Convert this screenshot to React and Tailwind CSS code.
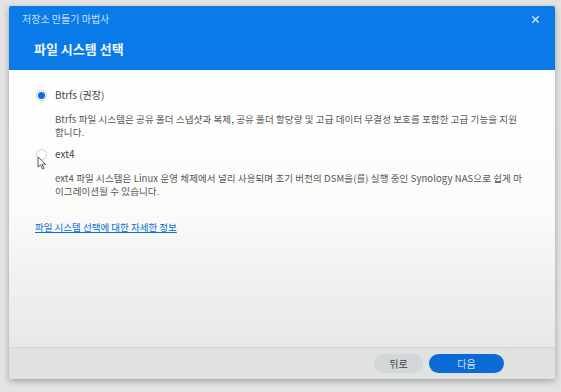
import React from 'react';
import { X } from 'lucide-react';

const font = { fontFamily: '"Noto Sans CJK KR", "Noto Sans", sans-serif' };

function Radio({ checked }) {
  return (
    <span className="flex h-[11px] w-[11px] items-center justify-center rounded-full border border-[#c9ccd0] bg-white">
      {checked && <span className="h-[7px] w-[7px] rounded-full bg-[#0a6fdc]" />}
    </span>
  );
}

function Cursor() {
  return (
    <svg className="absolute left-[37px] top-[156px]" width="10" height="14" viewBox="0 0 10 14">
      <path d="M1 1 L1 11 L3.5 8.8 L5.5 13 L7 12.3 L5 8.2 L8.5 8.2 Z" fill="#fff" stroke="#333" strokeWidth="0.8" />
    </svg>
  );
}

export default function App() {
  return (
    <div className="relative h-[392px] w-[561px] overflow-hidden bg-[#e3e4e2] pl-[9px] pt-[6px]" style={font}>
      <div className="flex h-[373px] w-[546px] flex-col overflow-hidden rounded-[2px] shadow-[0_2px_6px_rgba(0,0,0,0.3)]">
        {/* header */}
        <div className="h-[64px] bg-[#0a7ae9] pl-[13px] pr-[14px]">
          <div className="flex items-center justify-between pt-[7px]">
            <span className="text-[10px] leading-[12px] text-[#c8e0fb]">저장소 만들기 마법사</span>
            <X size={11} strokeWidth={3} className="text-[#d6e8fc]" />
          </div>
          <div className="pl-[12px] pt-[16px] text-[13px] font-bold leading-[16px] text-[#eef5fe]">파일 시스템 선택</div>
        </div>

        {/* body */}
        <div className="flex-1 bg-gradient-to-b from-white via-[#fbfbfa] to-[#e7e9e6] pl-[26px] pt-[19px] text-[#555]">
          <div className="flex items-center gap-[8px] pl-[1px]">
            <Radio checked />
            <span className="text-[10px] leading-[12px] text-[#444]">Btrfs (권장)</span>
          </div>
          <div className="pl-[20px] pt-[12px] text-[9.5px] leading-[13px] tracking-[0.1px]">
            <div>Btrfs 파일 시스템은 공유 폴더 스냅샷과 복제, 공유 폴더 할당량 및 고급 데이터 무결성 보호를 포함한 고급 기능을 지원</div>
            <div>합니다.</div>
          </div>
          <div className="flex items-center gap-[8px] pl-[1px] pt-[9px]">
            <Radio />
            <span className="text-[10px] leading-[12px] text-[#444]">ext4</span>
          </div>
          <div className="pl-[20px] pt-[12px] text-[9.5px] leading-[13px] tracking-[0.1px]">
            <div>ext4 파일 시스템은 Linux 운영 체제에서 널리 사용되며 초기 버전의 DSM을(를) 실행 중인 Synology NAS으로 쉽게 마</div>
            <div>이그레이션될 수 있습니다.</div>
          </div>
          <div className="pt-[14px]">
            <span className="text-[9.5px] leading-[13px] text-[#0a6fd6] underline">파일 시스템 선택에 대한 자세한 정보</span>
          </div>
        </div>

        {/* footer */}
        <div className="flex h-[32px] items-center justify-end gap-[6px] border-t border-[#d3d6d8] bg-[#e0e2df] pr-[51px]">
          <button className="h-[19px] w-[49px] rounded-full bg-[#d2d7da] text-[10px] text-[#444]">뒤로</button>
          <button className="h-[19px] w-[75px] rounded-full bg-[#0a6bd6] text-[10px] text-[#cfe2fb]">다음</button>
        </div>
      </div>
      <Cursor />
    </div>
  );
}
